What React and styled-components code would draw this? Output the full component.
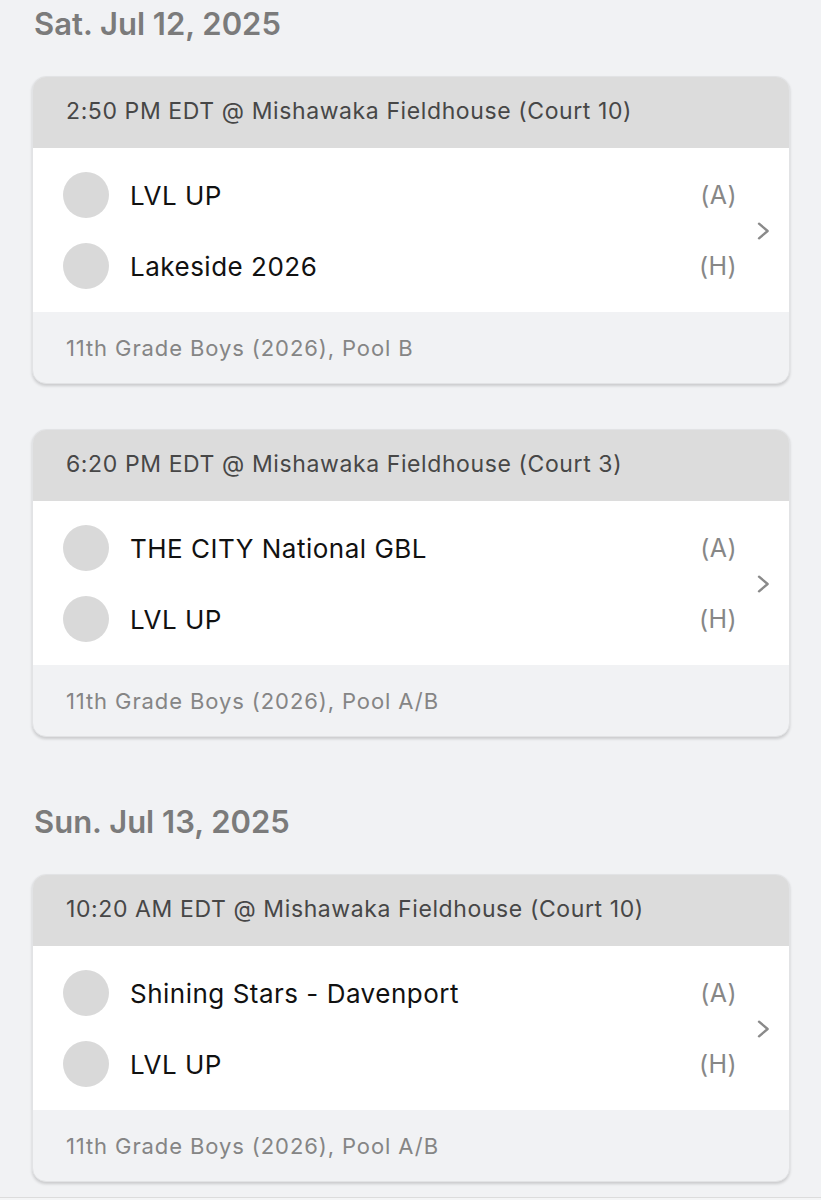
import React from "react";
import styled, { createGlobalStyle } from "styled-components";

const GlobalStyle = createGlobalStyle`
  body {
    margin: 0;
    background: #f1f2f4;
    font-family: Inter, "Open Sans", "Liberation Sans", sans-serif;
  }
`;

const days = [
  {
    date: "Sat. Jul 12, 2025",
    games: [
      {
        time: "2:50 PM EDT @ Mishawaka Fieldhouse (Court 10)",
        away: "LVL UP",
        home: "Lakeside 2026",
        division: "11th Grade Boys (2026), Pool B",
      },
      {
        time: "6:20 PM EDT @ Mishawaka Fieldhouse (Court 3)",
        away: "THE CITY National GBL",
        home: "LVL UP",
        division: "11th Grade Boys (2026), Pool A/B",
      },
    ],
  },
  {
    date: "Sun. Jul 13, 2025",
    games: [
      {
        time: "10:20 AM EDT @ Mishawaka Fieldhouse (Court 10)",
        away: "Shining Stars - Davenport",
        home: "LVL UP",
        division: "11th Grade Boys (2026), Pool A/B",
      },
    ],
  },
];

const Chevron = () => (
  <svg width="14" height="20" viewBox="0 0 14 20">
    <path
      d="M3 2.7 L11.6 10 L3 17.3"
      fill="none"
      stroke="#8a8a8a"
      strokeWidth="2.4"
      strokeLinecap="round"
      strokeLinejoin="round"
    />
  </svg>
);

const TeamRow = ({ name, side }) => (
  <Row>
    <Avatar />
    <TeamName>{name}</TeamName>
    <Side>({side})</Side>
  </Row>
);

const GameCard = ({ game }) => (
  <Card>
    <CardHeader>{game.time}</CardHeader>
    <CardBody>
      <Teams>
        <TeamRow name={game.away} side="A" />
        <TeamRow name={game.home} side="H" />
      </Teams>
      <ChevronCell>
        <Chevron />
      </ChevronCell>
    </CardBody>
    <CardFooter>{game.division}</CardFooter>
  </Card>
);

const App = () => {
  return (
    <>
      <GlobalStyle />
      <Page>
        {days.map((day) => (
          <Section key={day.date}>
            <DateHeading>{day.date}</DateHeading>
            <CardList>
              {day.games.map((game) => (
                <GameCard key={game.time} game={game} />
              ))}
            </CardList>
          </Section>
        ))}
        <BottomBar />
      </Page>
    </>
  );
};

const Page = styled.div`
  display: flex;
  flex-direction: column;
  gap: 65px;
  padding: 4px 31px 0 32px;
`;

const Section = styled.section`
  display: flex;
  flex-direction: column;
`;

const DateHeading = styled.h2`
  margin: 0 0 32px 2px;
  height: 40px;
  line-height: 40px;
  font-size: 31px;
  font-weight: 600;
  color: #7b7b7b;
`;

const CardList = styled.div`
  display: flex;
  flex-direction: column;
  gap: 45px;
`;

const Card = styled.div`
  border-radius: 14px;
  overflow: hidden;
  background: #f1f2f4;
  border: 1px solid #e2e3e5;
  box-shadow: 0 2px 3px rgba(0, 0, 0, 0.16);
`;

const CardHeader = styled.div`
  height: 71px;
  display: flex;
  align-items: center;
  padding-left: 33px;
  padding-bottom: 3px;
  box-sizing: border-box;
  background: #dcdcdc;
  color: #474747;
  font-size: 23px;
  letter-spacing: 0.6px;
`;

const CardBody = styled.div`
  display: flex;
  align-items: center;
  background: #ffffff;
  padding: 24px 0 23px 30px;
`;

const Teams = styled.div`
  flex: 1;
  display: flex;
  flex-direction: column;
  gap: 25px;
`;

const Row = styled.div`
  height: 46px;
  display: flex;
  align-items: center;
`;

const Avatar = styled.div`
  width: 46px;
  height: 46px;
  border-radius: 50%;
  background: #d9d9d9;
  flex-shrink: 0;
`;

const TeamName = styled.span`
  flex: 1;
  margin-left: 21px;
  font-size: 26px;
  color: #111111;
  letter-spacing: 0.5px;
`;

const Side = styled.span`
  font-size: 25px;
  color: #878787;
  letter-spacing: 0.4px;
`;

const ChevronCell = styled.div`
  width: 52px;
  display: flex;
  padding-left: 19px;
  box-sizing: border-box;
`;

const CardFooter = styled.div`
  height: 71px;
  display: flex;
  align-items: center;
  padding-left: 33px;
  color: #858585;
  font-size: 22px;
  letter-spacing: 0.9px;
`;

const BottomBar = styled.div`
  margin: -50px -31px 0 -32px;
  height: 20px;
  border-top: 1px solid #dcdcdc;
  background: #f4f5f6;
`;

export default App;
